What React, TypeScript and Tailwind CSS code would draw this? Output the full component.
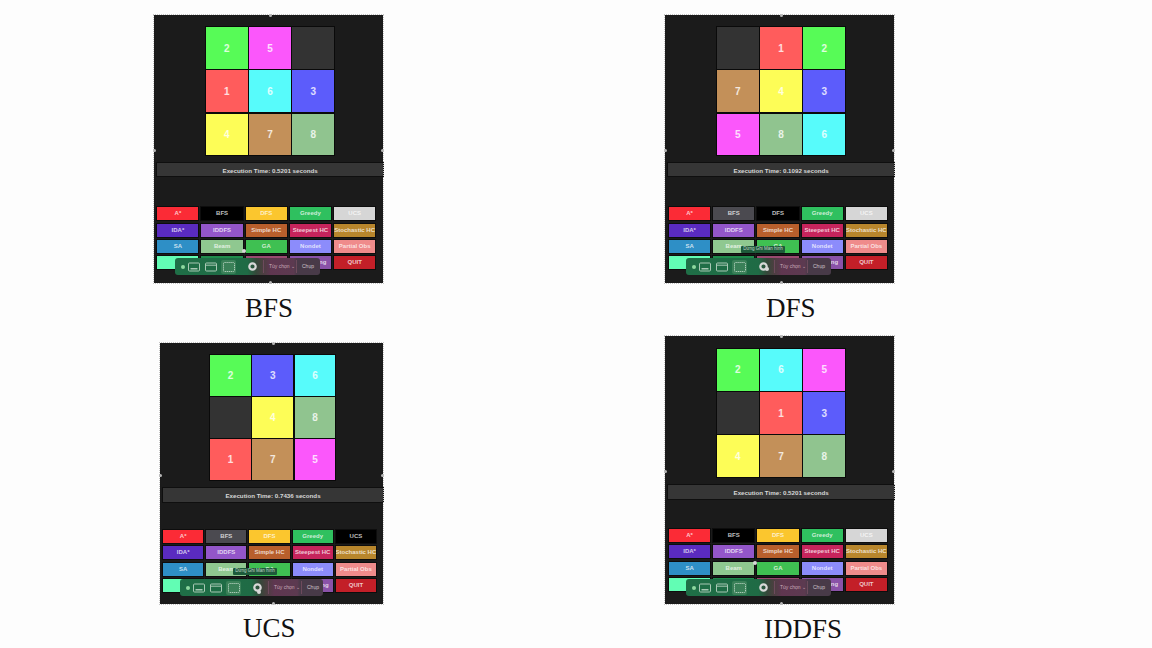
interface ButtonDef {
  label: string;
  color: string;
}

interface PanelProps {
  place: string;
  tiles: number[];
  gridClass: string;
  barClass: string;
  buttonsClass: string;
  time: string;
  selected: string[];
  toolbarClass: string;
  tooltipClass?: string;
  dotClass?: string;
  title: string;
  titleClass: string;
}

const tileColors: Record<number, string> = {
  0: "bg-[#333333]",
  1: "bg-[#ff5c5c]",
  2: "bg-[#57fb57]",
  3: "bg-[#5c5cfb]",
  4: "bg-[#fdfd57]",
  5: "bg-[#fb57fb]",
  6: "bg-[#57fbfb]",
  7: "bg-[#c39059]",
  8: "bg-[#90c48f]",
};

const buttons: ButtonDef[] = [
  { label: "A*", color: "bg-[#fb2b36]" },
  { label: "BFS", color: "bg-[#4b4a50]" },
  { label: "DFS", color: "bg-[#fbc62e]" },
  { label: "Greedy", color: "bg-[#2fc05f]" },
  { label: "UCS", color: "bg-[#d6d6d6]" },
  { label: "IDA*", color: "bg-[#5a2bc0]" },
  { label: "IDDFS", color: "bg-[#9356c9]" },
  { label: "Simple HC", color: "bg-[#b85f2c]" },
  { label: "Steepest HC", color: "bg-[#c6245c]" },
  { label: "Stochastic HC", color: "bg-[#b8862c]" },
  { label: "SA", color: "bg-[#2e8fc6]" },
  { label: "Beam", color: "bg-[#8fc890]" },
  { label: "GA", color: "bg-[#3fc052]" },
  { label: "Nondet", color: "bg-[#8c8cfb]" },
  { label: "Partial Obs", color: "bg-[#ef8b8b]" },
  { label: "", color: "bg-[#62fdb4]" },
  { label: "", color: "bg-[#1f8c4c]" },
  { label: "", color: "bg-[#9a4a70]" },
  { label: "Q-Learning", color: "bg-[#8a52a8]" },
  { label: "QUIT", color: "bg-[#c31f28]" },
];

const Handle = ({ className }: { className: string }) => (
  <span className={`absolute w-[3px] h-[3px] rounded-full bg-[#b8b8b8] ${className}`} />
);

const Toolbar = ({ className }: { className: string }) => (
  <div
    className={`absolute h-[17px] rounded-[3px] flex items-center bg-[linear-gradient(90deg,#1f6f47_0%,#1f6b45_50%,#35483a_56%,#49403f_60%,#5f3650_66%,#5c3a50_82%,#483a48_84%,#483a48_100%)] text-[5px] text-[#c9a9b8] ${className}`}
  >
    <span className="ml-[6px] w-[4px] h-[4px] rounded-full bg-[#8fd8a0]" />
    <svg className="ml-[3px]" width="12" height="10" viewBox="0 0 12 10" fill="none" stroke="#a8c8b4" strokeWidth="1">
      <rect x="0.5" y="1" width="11" height="8" rx="1" />
      <rect x="2.5" y="6" width="7" height="1.5" fill="#a8c8b4" stroke="none" />
    </svg>
    <svg className="ml-[5px]" width="12" height="10" viewBox="0 0 12 10" fill="none" stroke="#a8c8b4" strokeWidth="1">
      <rect x="0.5" y="1" width="11" height="8" rx="1" />
      <path d="M0.5 3.2h11" />
    </svg>
    <span className="ml-[4px] w-[15px] h-[14px] rounded-[2px] bg-[#3a8058] flex items-center justify-center">
      <svg width="12" height="10" viewBox="0 0 12 10" fill="none" stroke="#b8d4c2" strokeWidth="1" strokeDasharray="1.2 0.8">
        <rect x="0.5" y="0.5" width="11" height="9" rx="1" />
      </svg>
    </span>
    <svg className="ml-[11.5px]" width="9" height="9" viewBox="0 0 9 9" fill="none">
      <circle cx="4.5" cy="4.5" r="3.2" stroke="#d8d8d8" strokeWidth="2.2" />
    </svg>
    <span className="ml-[6.5px] w-px h-[13px] bg-[#6d4a5c]" />
    <span className="ml-[5px] w-[24px] whitespace-nowrap">Tùy chọn ⌄</span>
    <span className="ml-[3px] w-px h-[13px] bg-[#6d4a5c]" />
    <span className="ml-[5px] text-[#cfc4ca]">Chụp</span>
  </div>
);

const Panel = ({
  place,
  tiles,
  gridClass,
  barClass,
  buttonsClass,
  time,
  selected,
  toolbarClass,
  tooltipClass,
  dotClass,
  title,
  titleClass,
}: PanelProps) => (
  <>
    <div className={`absolute flex flex-col items-start bg-[#1b1b1b] outline-1 outline-dotted outline-[#c4c4c4] ${place}`}>
      <div className={`grid bg-[#0a0a0a] outline-1 outline-[#0a0a0a] ${gridClass}`}>
        {tiles.map((n) => (
          <div
            key={n}
            className={`flex items-center justify-center text-[10px] font-bold text-white/80 ${tileColors[n]}`}
          >
            {n !== 0 && n}
          </div>
        ))}
      </div>

      <div
        className={`h-[13.5px] pt-px bg-[#363636] outline-1 outline-[#0f0f0f] flex items-center justify-center text-[6.2px] font-bold text-[#d8d8d8] ${barClass}`}
      >
        Execution Time: {time} seconds
      </div>

      <div className={`grid gap-y-[3.2px] ${buttonsClass}`}>
        {buttons.map((b, i) => (
          <div
            key={i}
            className={`h-[13px] outline-1 outline-[#0d0d0d] flex items-center justify-center whitespace-nowrap text-[6px] font-bold text-white/75 ${
              selected.includes(b.label) ? "bg-black" : b.color
            }`}
          >
            {b.label}
          </div>
        ))}
      </div>

      <Handle className="left-1/2 -top-[1px]" />
      <Handle className="left-1/2 -bottom-[1px]" />
      <Handle className="-left-[1px] top-1/2" />
      <Handle className="-right-[1px] top-1/2" />

      <Toolbar className={toolbarClass} />
      {tooltipClass && (
        <div
          className={`absolute h-[7px] w-[44px] rounded-[1px] bg-[#1d5a3a] flex items-center justify-center whitespace-nowrap text-[4.5px] text-[#c6d8cc] ${tooltipClass}`}
        >
          Dừng Ghi Màn hình
        </div>
      )}
      {dotClass && <span className={`absolute w-[4px] h-[4px] rounded-full bg-[#d8d8d8] ${dotClass}`} />}
    </div>
    <div className={`absolute text-[27px] leading-none text-[#111111] font-['Liberation_Serif',serif] ${titleClass}`}>
      {title}
    </div>
  </>
);

export default function App() {
  return (
    <div className="relative w-[1152px] h-[648px] overflow-hidden bg-[#fdfdfd] font-['Liberation_Sans',Arial,sans-serif]">
      <Panel
        place="left-[154px] top-[15px] w-[229px] h-[268px]"
        tiles={[2, 5, 0, 1, 6, 3, 4, 7, 8]}
        gridClass="ml-[52px] mt-[12.3px] grid-cols-[repeat(3,41.7px)] grid-rows-[repeat(3,41.7px)] gap-[1.5px]"
        barClass="ml-[3.3px] mt-[7.6px] w-[225.7px]"
        buttonsClass="ml-[3.3px] mt-[31px] grid-cols-[repeat(5,41.2px)] gap-x-[3px]"
        time="0.5201"
        selected={["BFS"]}
        toolbarClass="left-[21px] top-[243px] w-[145px]"
        dotClass="left-[88px] top-[234px]"
        title="BFS"
        titleClass="left-[245px] top-[295px]"
      />
      <Panel
        place="left-[665px] top-[15px] w-[229px] h-[268px]"
        tiles={[0, 1, 2, 7, 4, 3, 5, 8, 6]}
        gridClass="ml-[52px] mt-[12.3px] grid-cols-[repeat(3,41.7px)] grid-rows-[repeat(3,41.7px)] gap-[1.5px]"
        barClass="ml-[3.3px] mt-[7.6px] w-[225.7px]"
        buttonsClass="ml-[4px] mt-[31px] grid-cols-[repeat(5,41.2px)] gap-x-[3px]"
        time="0.1092"
        selected={["DFS"]}
        toolbarClass="left-[21px] top-[243px] w-[145px]"
        tooltipClass="left-[76px] top-[231px]"
        dotClass="left-[100px] top-[252px]"
        title="DFS"
        titleClass="left-[766px] top-[295px]"
      />
      <Panel
        place="left-[160px] top-[343px] w-[223px] h-[261px]"
        tiles={[2, 3, 6, 0, 4, 8, 1, 7, 5]}
        gridClass="ml-[50.3px] mt-[12px] grid-cols-[repeat(3,40.7px)] grid-rows-[repeat(3,40.7px)] gap-[1.5px]"
        barClass="ml-[3px] mt-[8px] w-[220px]"
        buttonsClass="ml-[3px] mt-[28.7px] grid-cols-[repeat(5,40.3px)] gap-x-[2.9px]"
        time="0.7436"
        selected={["UCS"]}
        toolbarClass="left-[20px] top-[236px] w-[143px]"
        tooltipClass="left-[73px] top-[225px]"
        dotClass="left-[97px] top-[247px]"
        title="UCS"
        titleClass="left-[243px] top-[615px]"
      />
      <Panel
        place="left-[665px] top-[336px] w-[229px] h-[268px]"
        tiles={[2, 6, 5, 0, 1, 3, 4, 7, 8]}
        gridClass="ml-[52px] mt-[13px] grid-cols-[repeat(3,41.7px)] grid-rows-[repeat(3,41.7px)] gap-[1.5px]"
        barClass="ml-[3.3px] mt-[8.4px] w-[225.7px]"
        buttonsClass="ml-[4px] mt-[30.3px] grid-cols-[repeat(5,41.2px)] gap-x-[3px]"
        time="0.5201"
        selected={["BFS"]}
        toolbarClass="left-[21px] top-[243px] w-[145px]"
        dotClass="left-[88px] top-[225px]"
        title="IDDFS"
        titleClass="left-[764px] top-[616px]"
      />
    </div>
  );
}
